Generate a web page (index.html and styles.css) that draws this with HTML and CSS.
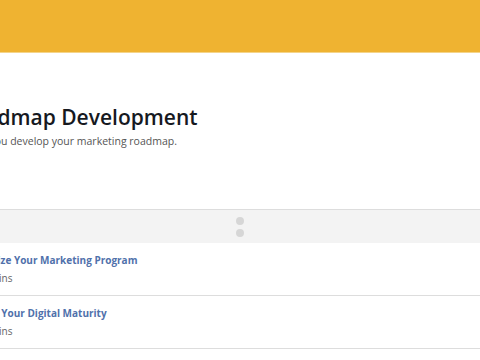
FILE: index.html
```html
<!DOCTYPE html>
<html lang="en">
<head>
  <meta charset="UTF-8">
  <title>Roadmap Development</title>
  <link rel="stylesheet" href="styles.css">
</head>
<body>
  <div class="banner"></div>
  <div class="intro">
    <h1 class="trail-title">Roadmap Development</h1>
    <p class="trail-desc">Helps you develop your marketing roadmap.</p>
  </div>
  <div class="handle">
    <span class="dot"></span>
    <span class="dot"></span>
  </div>
  <ul class="modules">
    <li class="module">
      <a class="module-title" href="#">Optimize Your Marketing Program</a>
      <span class="module-time">~10 mins</span>
    </li>
    <li class="module">
      <a class="module-title" href="#">Assess Your Digital Maturity</a>
      <span class="module-time">~15 mins</span>
    </li>
  </ul>
</body>
</html>
```

FILE: styles.css
```css
body {
  margin: 0;
  padding: 0;
  background: #ffffff;
  font-family: "Open Sans", Arial, sans-serif;
  overflow: hidden;
}

.banner {
  height: 52px;
  background: #efb331;
  border-bottom: 1px solid #f4d48a;
}

.intro {
  margin-left: -41px;
  padding: 50px 0 60px 0;
}

.trail-title {
  margin: 0;
  font-size: 21px;
  font-weight: 600;
  line-height: 28px;
  color: #16191f;
}

.trail-desc {
  margin: 2px 0 0 0;
  font-size: 10.5px;
  line-height: 16px;
  color: #555555;
}

.handle {
  height: 33px;
  background: #f3f3f3;
  border-top: 1px solid #dddddd;
  display: flex;
  flex-direction: column;
  align-items: center;
  justify-content: center;
  gap: 4px;
}

.dot {
  width: 8px;
  height: 8px;
  border-radius: 50%;
  background: #d6d6d6;
}

.modules {
  list-style: none;
  margin: 0;
  padding: 0;
}

.module {
  display: flex;
  flex-direction: column;
  align-items: flex-start;
  gap: 4px;
  padding: 9px 0 10px 0;
  border-top: 1px solid #ffffff;
  border-bottom: 1px solid #dddddd;
  margin-left: -34px;
}

.module-title {
  font-size: 10px;
  font-weight: 700;
  line-height: 14px;
  color: #5071ab;
  text-decoration: none;
}

.module-time {
  margin-left: 4px;
  font-size: 10px;
  line-height: 14px;
  color: #666666;
}
```
